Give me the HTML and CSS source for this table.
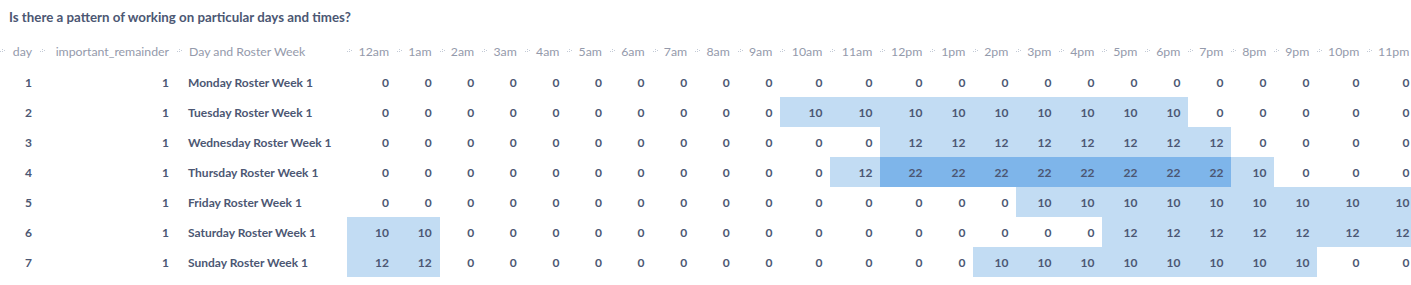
FILE: index.html
```html
<!DOCTYPE html>
<html>
<head>
<meta charset="utf-8">
<link rel="stylesheet" href="styles.css">
</head>
<body>
<div class="card">
  <h1 class="title">Is there a pattern of working on particular days and times?</h1>
  <div class="viewport">
    <table class="grid">
      <colgroup>
        <col class="w-day"><col class="w-rem"><col class="w-name">
        <col class="w-wide">
        <col class="w-am"><col class="w-am"><col class="w-am"><col class="w-am"><col class="w-am"><col class="w-am"><col class="w-am"><col class="w-am"><col class="w-am">
        <col class="w-wide"><col class="w-wide"><col class="w-wide">
        <col class="w-pm"><col class="w-pm"><col class="w-pm"><col class="w-pm"><col class="w-pm"><col class="w-pm"><col class="w-pm"><col class="w-pm"><col class="w-pm">
        <col class="w-wide"><col class="w-wide">
      </colgroup>
      <thead>
        <tr id="head"></tr>
      </thead>
      <tbody id="body"></tbody>
    </table>
  </div>
</div>
<script src="app.js"></script>
</body>
</html>
```

FILE: app.js
```js
var hours = ["12am","1am","2am","3am","4am","5am","6am","7am","8am","9am","10am","11am","12pm","1pm","2pm","3pm","4pm","5pm","6pm","7pm","8pm","9pm","10pm","11pm"];
function rep(v, n) { var a = []; for (var i = 0; i < n; i++) a.push(v); return a; }
var rows = [
  ["Monday", rep(0, 24)],
  ["Tuesday", [].concat(rep(0, 10), rep(10, 9), rep(0, 5))],
  ["Wednesday", [].concat(rep(0, 12), rep(12, 8), rep(0, 4))],
  ["Thursday", [].concat(rep(0, 11), [12], rep(22, 8), [10], rep(0, 3))],
  ["Friday", [].concat(rep(0, 15), rep(10, 9))],
  ["Saturday", [].concat(rep(10, 2), rep(0, 15), rep(12, 7))],
  ["Sunday", [].concat(rep(12, 2), rep(0, 12), rep(10, 8), rep(0, 2))]
];
var grip = '<svg class="grip" width="6" height="4" viewBox="0 0 6 4"><rect x="0" y="2" width="1" height="1"/><rect x="2" y="2" width="1" height="1"/><rect x="4" y="1" width="1" height="1"/><rect x="2" y="0" width="1" height="1"/></svg>';
function th(label, left) {
  return '<th><div class="hcell' + (left ? ' left' : '') + '">' + grip + '<span>' + label + '</span></div></th>';
}
var h = th("day") + th("important_remainder") + th("Day and Roster Week", true);
hours.forEach(function (x) { h += th(x); });
document.getElementById("head").innerHTML = h;
var b = "";
rows.forEach(function (r, i) {
  var s = '<tr><td class="num">' + (i + 1) + '</td><td class="num">1</td><td class="txt">' + r[0] + ' Roster Week 1</td>';
  r[1].forEach(function (v) {
    var c = v >= 20 ? " hot" : (v > 0 ? " warm" : "");
    s += '<td class="num' + c + '">' + v + '</td>';
  });
  b += s + "</tr>";
});
document.getElementById("body").innerHTML = b;
```

FILE: styles.css
```css
html, body {
  margin: 0;
  padding: 0;
  background: #ffffff;
  overflow: hidden;
}
body {
  font-family: Lato, "Noto Sans", sans-serif;
  color: #4c5773;
}
.card {
  width: 1411px;
}
.title {
  margin: 7px 0 0 9px;
  font-size: 13.3px;
  line-height: 20px;
  font-weight: 700;
  color: #4c5773;
}
.viewport {
  margin-top: 8px;
  width: 1411px;
  overflow: hidden;
}
.grid {
  border-collapse: collapse;
  border-spacing: 0;
  table-layout: fixed;
  width: 1417.4px;
}
.w-day { width: 40px; }
.w-rem { width: 137px; }
.w-name { width: 170px; }
.w-wide { width: 50px; }
.w-am { width: 42.6px; }
.w-pm { width: 43px; }
th {
  height: 32px;
  padding: 0;
  font-weight: 400;
  font-size: 12.3px;
  color: #949aab;
  white-space: nowrap;
}
.hcell {
  display: flex;
  align-items: center;
  justify-content: space-between;
  padding-right: 8px;
}
.hcell.left {
  justify-content: flex-start;
  gap: 6px;
}
.grip {
  fill: #c3cad6;
  flex: none;
  margin-left: 0;
}
td {
  height: 30px;
  padding: 0 8px 0 0;
  font-size: 12px;
  font-weight: 700;
  color: #4c5773;
  white-space: nowrap;
}
td.num {
  text-align: right;
}
td.txt {
  text-align: left;
  padding-left: 11px;
}
td.warm {
  background: #c2dcf3;
}
td.hot {
  background: #7eb5ea;
}
```
